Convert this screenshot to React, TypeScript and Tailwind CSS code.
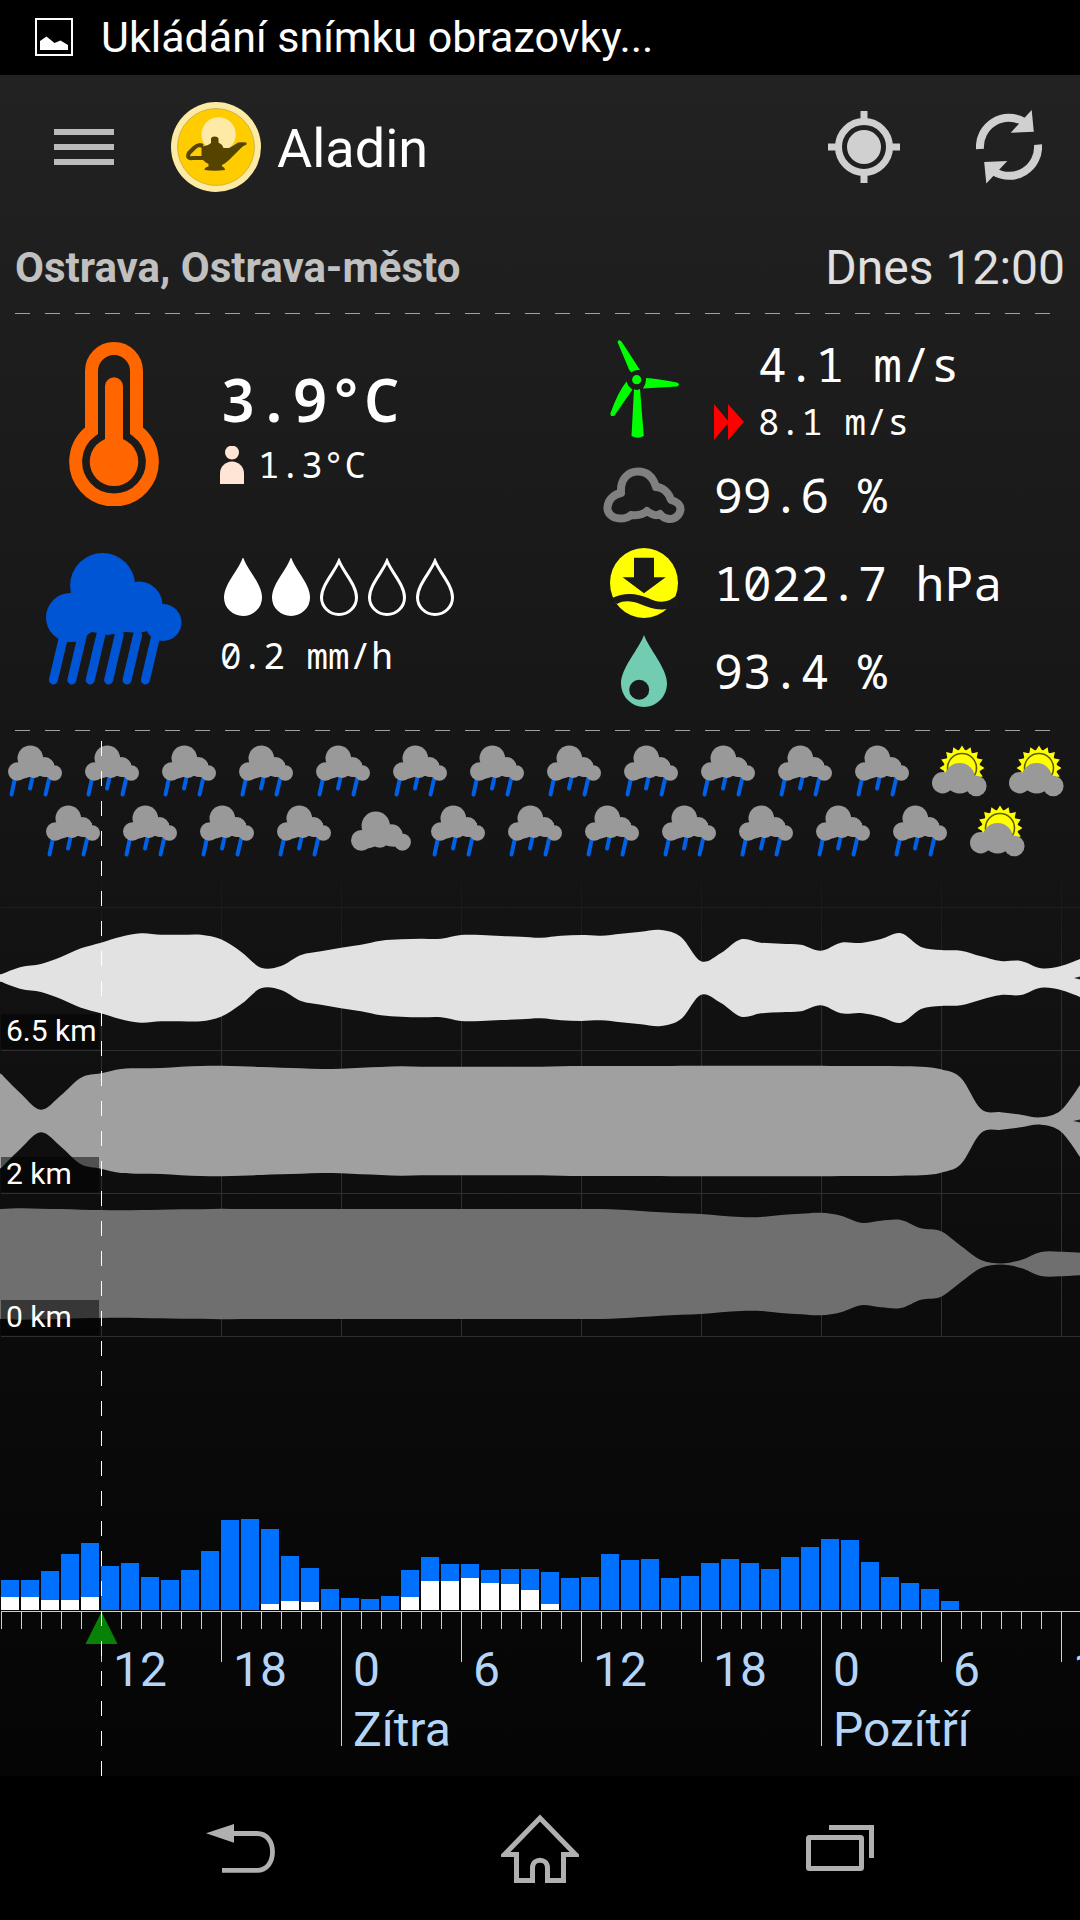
import type { ReactNode } from 'react';

type Sky = 'rain' | 'cloud' | 'sun';

// Total and snow precipitation per hour, in chart units
const rain = [
  30, 30, 39, 56, 67, 44, 47, 33, 30, 40, 59, 90, 91, 81, 54, 42, 21, 12, 11, 14, 40, 53, 46, 46, 40, 41, 41, 38, 32, 33,
  56, 50, 51, 32, 34, 47, 51, 47, 41, 53, 63, 71, 70, 48, 33, 27, 21, 9,
];
const snow: Record<number, number> = {
  0: 13, 1: 13, 2: 10, 3: 10, 4: 13, 13: 6, 14: 9, 15: 8, 20: 13, 21: 29, 22: 29, 23: 32, 24: 27, 25: 26, 26: 20, 27: 6,
};

// Half thickness of every cloud layer, one value per hour
const highClouds = [
  3.7, 11, 14, 21, 29.7, 35.3, 41.3, 44.7, 43.3, 43.2, 43.3, 38.7, 26.3, 10.3, 12, 23, 26.7, 30.3, 33.3, 37.3, 38.7,
  39.3, 39.3, 43, 43, 42, 41.3, 40.3, 42.3, 43, 42.3, 44.3, 46.3, 48, 41, 16.7, 25, 38.7, 35.3, 34.3, 33.3, 27.3, 35.3,
  35, 39, 44.7, 31, 28, 27.3, 21.7, 17, 17, 9.7, 12, 19.3,
];
const midClouds = [
  47.3, 27.3, 11.3, 25.7, 43.3, 47.7, 52, 52.7, 53, 54.3, 55, 55.3, 54.7, 54, 53.3, 52.7, 52, 52.3, 53.3, 54, 54.7,
  54.3, 54.3, 54.3, 54.3, 54.3, 54.3, 54.3, 54.7, 55, 55, 55, 55, 55, 55.3, 55.3, 55.3, 55.3, 55.3, 55.3, 55.3, 55.3,
  55, 55, 55, 54.7, 54.3, 51.7, 43, 12, 8.7, 6.3, 3.7, 10.7, 37.3,
];
const lowClouds = [
  55, 55.7, 55.3, 55, 54.3, 54, 53.7, 54, 54.3, 54.7, 54.7, 55.3, 55, 55, 55, 55, 55, 55, 55, 55, 55, 55, 55, 55, 55,
  55, 55, 55, 55, 55, 55, 54.3, 53, 51.7, 50.7, 50, 48.3, 47, 47, 49, 50.3, 51.3, 48.3, 41.3, 43.3, 44, 35.7, 32.7, 18,
  4, 0.5, 4, 12, 12.3, 11.3,
];

const layers = [
  { label: '6.5 km', center: 113, color: '#e2e2e2', values: highClouds },
  { label: '2 km', center: 256, color: '#a0a0a0', values: midClouds },
  { label: '0 km', center: 399, color: '#6f6f6f', values: lowClouds },
];

const evenHours: Sky[] = [...Array<Sky>(12).fill('rain'), 'sun', 'sun'];
const oddHours: Sky[] = [...Array<Sky>(4).fill('rain'), 'cloud', ...Array<Sky>(7).fill('rain'), 'sun'];

const marks = [
  { x: 101, hour: '12' },
  { x: 221, hour: '18' },
  { x: 341, hour: '0', day: 'Zítra' },
  { x: 461, hour: '6' },
  { x: 581, hour: '12' },
  { x: 701, hour: '18' },
  { x: 821, hour: '0', day: 'Pozítří' },
  { x: 941, hour: '6' },
  { x: 1061, hour: '12' },
];

const AXIS = 746;

function curve(points: number[][]) {
  let d = '';
  for (let i = 0; i < points.length - 1; i++) {
    const p0 = points[Math.max(i - 1, 0)];
    const p1 = points[i];
    const p2 = points[i + 1];
    const p3 = points[Math.min(i + 2, points.length - 1)];
    d += `C${p1[0] + (p2[0] - p0[0]) / 6} ${p1[1] + (p2[1] - p0[1]) / 6} ${p2[0] - (p3[0] - p1[0]) / 6} ${p2[1] - (p3[1] - p1[1]) / 6} ${p2[0]} ${p2[1]}`;
  }
  return d;
}

function layerPath(values: number[], center: number) {
  const top = values.map((v, i) => [i * 20 + 1, center - v]);
  const bottom = values.map((v, i) => [i * 20 + 1, center + v]).reverse();
  return `M0 ${center - values[0]}L${top[0].join(' ')}${curve(top)}L${bottom[0].join(' ')}${curve(bottom)}L0 ${center + values[0]}Z`;
}

function Logo() {
  return (
    <svg className="size-[90px]" viewBox="0 0 90 90">
      <circle cx="45" cy="45" r="45" fill="#fdeaa5" />
      <circle cx="45" cy="45" r="38.5" fill="#ffcc00" stroke="#b39a3c" strokeWidth="0.6" />
      <circle cx="47.6" cy="32.5" r="17.2" fill="#fee9a5" />
      <path d="M32 44L29 43Q26 43 23 46L18 51Q15 57 22 56H32" fill="none" stroke="#554400" strokeWidth="4" />
      <path
        d="M40 41V37Q40 34.500 43.500 34.500Q47.500 34.500 47.500 37V40.500Q51 42 52.500 46H58Q62 44 67 40.500Q71 40 75.500 40.500V42.500Q72 43.500 70 46L58 58Q55 61 51 63V64.500Q54 65.500 54 68Q44 69.500 33.500 68Q33.500 65 37.500 64.500V62Q30.500 59 30.500 53V44Q36 45 40 41Z"
        fill="#554400"
      />
    </svg>
  );
}

function Thermometer() {
  return (
    <svg className="h-[164px] w-[90px]" viewBox="0 0 90 164" fill="#ff6600">
      <path
        d="M22.500 88.700V29A22.500 22.500 0 0 1 67.500 29V88.700A38.300 38.300 0 1 1 22.500 88.700Z"
        fill="none"
        stroke="#ff6600"
        strokeWidth="13"
      />
      <circle cx="45" cy="119.700" r="24.300" />
      <rect x="36" y="35.300" width="18" height="70" rx="9" />
    </svg>
  );
}

function RainCloud() {
  return (
    <svg className="h-[132px] w-[136px]" viewBox="0 0 136 132" fill="#0055d4">
      <circle cx="56.600" cy="32.500" r="32.500" />
      <circle cx="24.500" cy="64.500" r="24.500" />
      <circle cx="93" cy="52" r="23.500" />
      <circle cx="117" cy="69.500" r="18.500" />
      <path d="M24 45H112V84L102 78L92 80L80 79L62 82L46 79L40 82L28 88Z" />
      {[0, 1, 2, 3, 4, 5].map((i) => (
        <path key={i} d={`M${18 + i * 18.4} 82L${7.4 + i * 18.4} 127`} stroke="#0055d4" strokeWidth="9" strokeLinecap="round" />
      ))}
    </svg>
  );
}

function Drop({ filled }: { filled: boolean }) {
  return (
    <svg className="h-[58px] w-[38px]" viewBox="0 0 38 58">
      <path
        d="M19 3C24 15 36.500 27 36.500 39.500A17.500 17 0 0 1 1.500 39.500C1.500 27 14 15 19 3Z"
        fill={filled ? '#fff' : 'none'}
        stroke="#fff"
        strokeWidth="3"
      />
    </svg>
  );
}

function Turbine() {
  return (
    <svg className="h-[98px] w-[69px]" viewBox="0 0 69 98" fill="#00ff00">
      <circle cx="26.700" cy="39.700" r="4.600" />
      <path d="M24 49Q26.500 51 30 49L33.800 96Q28 99.500 21.500 96Z" />
      <path d="M7.500 2Q8.500 -1 11.500 1.500L30 30Q24 29.500 21.500 32.500Q19 31 18 27Z" />
      <path d="M36 38Q47 38.500 67 42.500Q71 44.500 67 46.500L33 48.500Q36.500 43 36 38Z" />
      <path d="M16.500 41.500Q18 47 22.500 49.500L4.500 75.500Q0 77.500 0.500 73Q8 52 16.500 41.500Z" />
    </svg>
  );
}

function CloudOutline() {
  return (
    <svg className="h-[56px] w-[82px]" viewBox="0 0 82 56">
      <path
        d="M18 26C17 12 25 4.500 35 4.500C44 4.500 50 10 53 20C60 20 66 26 68 33C75 35 78 39 77.500 43C76 50 70 53 64 51.500C60 51 59 49 57 47C54 49 49 48 44 44C41 47 37 49 28 48C25 51 22 51.500 17 51.500C9 51.500 4 46 4.500 40C5 32 12 27 18 26Z"
        fill="none"
        stroke="#808080"
        strokeWidth="8"
        strokeLinejoin="round"
      />
    </svg>
  );
}

function Pressure() {
  return (
    <svg className="h-[70px] w-[68px]" viewBox="0 0 68 70">
      <ellipse cx="34" cy="35" rx="34" ry="35" fill="#ffff00" />
      <path
        d="M24 9.700H44V29.300H55.700L34 45.300L12.600 29.300H24ZM1 50.500C16 43 28 46 38 50C48 55 58 56 68 46V60L54.700 61.300C46 62.500 38 59 30 56C22 53 14 52 7 56Z"
        fill="#1a1a1a"
      />
    </svg>
  );
}

function Humidity() {
  return (
    <svg className="h-[72px] w-[46px]" viewBox="0 0 46 72">
      <path d="M23 0C28 14 46 33 46 48.500A23 23.500 0 0 1 0 48.500C0 33 18 14 23 0Z" fill="#71ccb2" />
      <circle cx="18.200" cy="54.700" r="10" fill="#181818" />
    </svg>
  );
}

function SkyIcon({ sky }: { sky: Sky }) {
  const cloud = (
    <g fill="#999">
      <circle cx="22.300" cy="13.300" r="12.800" />
      <circle cx="9.300" cy="26.500" r="9.300" />
      <circle cx="36.500" cy="22" r="10" />
      <circle cx="46.300" cy="28" r="7.700" />
      <circle cx="26" cy="24" r="9" />
      <path d="M9 18H46V33L38 32L28 30L18 33L10 35Z" />
    </g>
  );
  return (
    <svg className="h-[52px] w-[54px] shrink-0 overflow-visible" viewBox="0 0 54 52">
      {sky === 'rain' && (
        <>
          <path d="M7 33L3.500 49.500M25 30L22 43.500M42 30L37.500 49.500" stroke="#0060e6" strokeWidth="4" strokeLinecap="round" />
          {cloud}
        </>
      )}
      {sky === 'cloud' && <g transform="translate(-3 6) scale(1.11)">{cloud}</g>}
      {sky === 'sun' && (
        <>
          <g fill="#ffff00">
            <circle cx="30" cy="23" r="18" />
            {Array.from({ length: 16 }).map((_, i) => (
              <path key={i} d="M26.500 6L30 0.500L33.500 6Z" transform={`rotate(${i * 22.5} 30 23)`} />
            ))}
          </g>
          <circle cx="30" cy="23" r="14.500" fill="none" stroke="#5c5c08" strokeWidth="1.600" />
          <g fill="#999">
            <circle cx="10.700" cy="37.700" r="10.700" />
            <circle cx="27.700" cy="33.300" r="15.300" />
            <circle cx="44.300" cy="41" r="10.300" />
          </g>
        </>
      )}
    </svg>
  );
}

function DashedRule() {
  return (
    <div className="mx-[15px] h-px bg-[repeating-linear-gradient(to_right,#a0a0a0_0,#a0a0a0_15px,transparent_15px,transparent_30px)]" />
  );
}

function Metric({ icon, children }: { icon: ReactNode; children: ReactNode }) {
  return (
    <div className="flex h-[88px] items-center gap-[26px]">
      <div className="flex w-[88px] justify-center">{icon}</div>
      <p className="text-[48px] leading-[64px]">{children}</p>
    </div>
  );
}

function Meteogram() {
  return (
    <svg className="block w-full font-['Roboto',sans-serif]" viewBox="0 0 1080 911">
      <defs>
        <linearGradient id="grid-fade" gradientUnits="userSpaceOnUse" x1="0" y1="0" x2="0" y2="150">
          <stop offset="0" stopColor="#2e2e2e" stopOpacity="0" />
          <stop offset="1" stopColor="#2e2e2e" />
        </linearGradient>
      </defs>

      {/* Grid */}
      {marks.map((m) => (
        <rect key={m.x} x={m.x} y="0" width="1" height="472" fill="url(#grid-fade)" />
      ))}
      <rect x="1" y="42" width="1079" height="1" fill="#1d1d1d" />
      {[185, 328, 471].map((y) => (
        <rect key={y} x="1" y={y} width="1079" height="1" fill="#2e2e2e" />
      ))}

      {/* Cloud layers */}
      {layers.map((layer) => (
        <g key={layer.label}>
          <path d={layerPath(layer.values, layer.center)} fill={layer.color} />
          <rect x="1" y={layer.center + 36} width="98" height="35" fillOpacity="0.5" />
          <text x="6" y={layer.center + 63} fontSize="30" fill="#fff">
            {layer.label}
          </text>
        </g>
      ))}
      <path d="M1080 111.500L1074 113L1080 114.500ZM1080 254.500L1073 256L1080 257.500Z" fill="#222" />

      {/* Precipitation */}
      {rain.map((v, i) => (
        <rect key={i} x={i * 20 + 1} y={745 - v} width="18" height={v} fill="#0070ff" />
      ))}
      {Object.entries(snow).map(([i, v]) => (
        <rect key={i} x={Number(i) * 20 + 1} y={745 - v} width="18" height={v} fill="#fff" />
      ))}

      {/* Time axis */}
      <g fill="#b5d5f7">
        <rect x="1" y={AXIS} width="1079" height="1" />
        {Array.from({ length: 54 }).map((_, i) => (
          <rect key={i} x={i * 20 + 1} y={AXIS} width="1" height="18" />
        ))}
        {marks.map((m) => (
          <g key={m.x} fontSize="48">
            <rect x={m.x} y={AXIS} width="1" height={m.day ? 135 : 51} />
            <text x={m.x + 12} y="821">
              {m.hour}
            </text>
            {m.day && (
              <text x={m.x + 12} y="881">
                {m.day}
              </text>
            )}
          </g>
        ))}
      </g>
      <path d="M101.500 747L117.500 779H85.500Z" fill="#078207" />
    </svg>
  );
}

export default function App() {
  return (
    <div className="flex min-h-screen flex-col overflow-hidden bg-black font-['Roboto',sans-serif] text-white">
      {/* Status bar */}
      <div className="flex h-[75px] items-center gap-7 pr-4 pb-0.5 pl-[35px]">
        <svg className="size-[38px] shrink-0" viewBox="0 0 38 38">
          <rect x="1" y="1" width="36" height="36" fill="none" stroke="#fff" strokeWidth="2" />
          <path d="M5 32V23L11.500 18.500L19.500 25L25.500 22.500L33 27V32Z" fill="#fff" />
        </svg>
        <p className="truncate text-[43px] leading-[56px]">Ukládání snímku obrazovky...</p>
      </div>

      <main className="flex-1 bg-linear-to-b from-[#222] via-[#131313] to-[#050505]">
        {/* App bar */}
        <header className="flex h-36 items-center pr-[38px] pl-[54px]">
          <button aria-label="Menu" className="flex w-[60px] flex-col gap-[9px]">
            <span className="h-1.5 w-full bg-[#bbb]" />
            <span className="h-1.5 w-full bg-[#bbb]" />
            <span className="h-1.5 w-full bg-[#bbb]" />
          </button>
          <div className="ml-[57px] flex items-center gap-4">
            <Logo />
            <h1 className="pt-1 text-[54px] leading-[64px]">Aladin</h1>
          </div>
          <div className="ml-auto flex items-center gap-[76px]">
            <button aria-label="Poloha">
              <svg className="size-[72px]" viewBox="0 0 72 72" fill="#d0d0d0">
                <circle cx="36" cy="36" r="25.500" fill="none" stroke="#d0d0d0" strokeWidth="7" />
                <circle cx="36" cy="36" r="17" />
                <path d="M32.500 0H39.500V9H32.500ZM32.500 63H39.500V72H32.500ZM0 32.500H9V39.500H0ZM63 32.500H72V39.500H63Z" />
              </svg>
            </button>
            <button aria-label="Obnovit">
              <svg className="h-[74px] w-[66px]" viewBox="0 0 66 74" fill="#d0d0d0">
                {[0, 180].map((angle) => (
                  <g key={angle} transform={`rotate(${angle} 33 36.800)`}>
                    <path d="M4 39A29 29 0 0 1 48 12" fill="none" stroke="#d0d0d0" strokeWidth="8" />
                    <path d="M55.700 0L57.800 21.700L34.700 22.700Z" />
                  </g>
                ))}
              </svg>
            </button>
          </div>
        </header>

        <div className="flex h-[94px] items-center justify-between px-[15px] pt-1">
          <h2 className="text-[42px] leading-[56px] font-bold text-[#c0c0c0]">Ostrava, Ostrava-město</h2>
          <p className="text-[48px] leading-[56px] text-[#e0e0e0]">Dnes 12:00</p>
        </div>
        <DashedRule />

        {/* Current values */}
        <section className="grid h-[416px] grid-cols-[5fr_4fr] font-['Droid_Sans_Mono','Noto_Sans_Mono','DejaVu_Sans_Mono',monospace]">
          <div className="pt-3">
            <div className="flex h-[195px] items-center">
              <div className="flex w-[220px] justify-center pl-2">
                <Thermometer />
              </div>
              <div className="flex flex-col gap-1.5 pb-1">
                <p className="text-[60px] leading-[80px] font-semibold">3.9°C</p>
                <p className="flex items-center gap-3.5 text-[36px] leading-[40px]">
                  <svg className="h-[38px] w-[24px]" viewBox="0 0 24 38" fill="#ffe5d5">
                    <circle cx="12" cy="6.500" r="7" />
                    <path d="M0 38V27.500A12 12 0 0 1 24 27.500V38Z" />
                  </svg>
                  1.3°C
                </p>
              </div>
            </div>
            <div className="flex h-[195px] items-center">
              <div className="flex w-[220px] justify-center pl-2">
                <RainCloud />
              </div>
              <div className="flex flex-col gap-5 pb-1">
                <div className="flex gap-[10px] pl-1">
                  {[1, 2, 3, 4, 5].map((n) => (
                    <Drop key={n} filled={n <= 2} />
                  ))}
                </div>
                <p className="text-[36px] leading-[40px]">0.2 mm/h</p>
              </div>
            </div>
          </div>

          <div className="pt-[13px]">
            <div className="flex h-[124px] items-center gap-[26px]">
              <div className="flex w-[88px] justify-center">
                <Turbine />
              </div>
              <div className="flex flex-col gap-1.5 pb-1">
                <p className="pl-11 text-[48px] leading-[64px]">4.1 m/s</p>
                <p className="flex items-center gap-3.5 text-[36px] leading-[40px]">
                  <svg className="h-[36px] w-[30px]" viewBox="0 0 30 36" fill="#ff0000">
                    <path d="M0 0L15 18L0 36ZM14 0L30 18L14 36Z" />
                  </svg>
                  8.1 m/s
                </p>
              </div>
            </div>
            <Metric icon={<CloudOutline />}>99.6 %</Metric>
            <Metric icon={<Pressure />}>1022.7 hPa</Metric>
            <Metric icon={<Humidity />}>93.4 %</Metric>
          </div>
        </section>
        <DashedRule />

        {/* Forecast */}
        <section className="relative pt-[14px]">
          <div className="flex flex-col gap-2 pb-2">
            <div className="flex gap-[23px] pl-2">
              {evenHours.map((sky, i) => (
                <SkyIcon key={i} sky={sky} />
              ))}
            </div>
            <div className="flex gap-[23px] pl-[46px]">
              {oddHours.map((sky, i) => (
                <SkyIcon key={i} sky={sky} />
              ))}
            </div>
          </div>
          <Meteogram />
          {/* Selected time cursor */}
          <div className="absolute top-[10px] bottom-0 left-[9.35%] w-px bg-[repeating-linear-gradient(to_bottom,#fff_0,#fff_15px,transparent_15px,transparent_30px)]" />
        </section>
      </main>

      {/* System navigation */}
      <nav className="grid h-36 grid-cols-3 place-items-center px-[90px]">
        <button aria-label="Zpět">
          <svg className="h-[49px] w-[69px]" viewBox="0 0 69 49">
            <path d="M0 9.300L28 0V18.700Z" fill="#b0b0b0" />
            <path d="M26 9.500H51C61 9.500 66.500 18 66.500 28S61 46.300 51 46.300H16" fill="none" stroke="#b0b0b0" strokeWidth="4.800" />
          </svg>
        </button>
        <button aria-label="Domů">
          <svg className="h-[69px] w-[78px]" viewBox="0 0 78 69">
            <path
              d="M39 4L3.500 40.500H15.500V66.500H31.500V54C31.500 43.500 46.500 43.500 46.500 54V66.500H62.500V40.500H74.500Z"
              fill="none"
              stroke="#b0b0b0"
              strokeWidth="5"
            />
          </svg>
        </button>
        <button aria-label="Poslední aplikace">
          <svg className="h-[46px] w-[68px]" viewBox="0 0 68 46" fill="none" stroke="#b0b0b0" strokeWidth="5">
            <rect x="2.500" y="12.500" width="53" height="31" rx="1" />
            <path d="M23 2.500H65.500V33" />
          </svg>
        </button>
      </nav>
    </div>
  );
}
